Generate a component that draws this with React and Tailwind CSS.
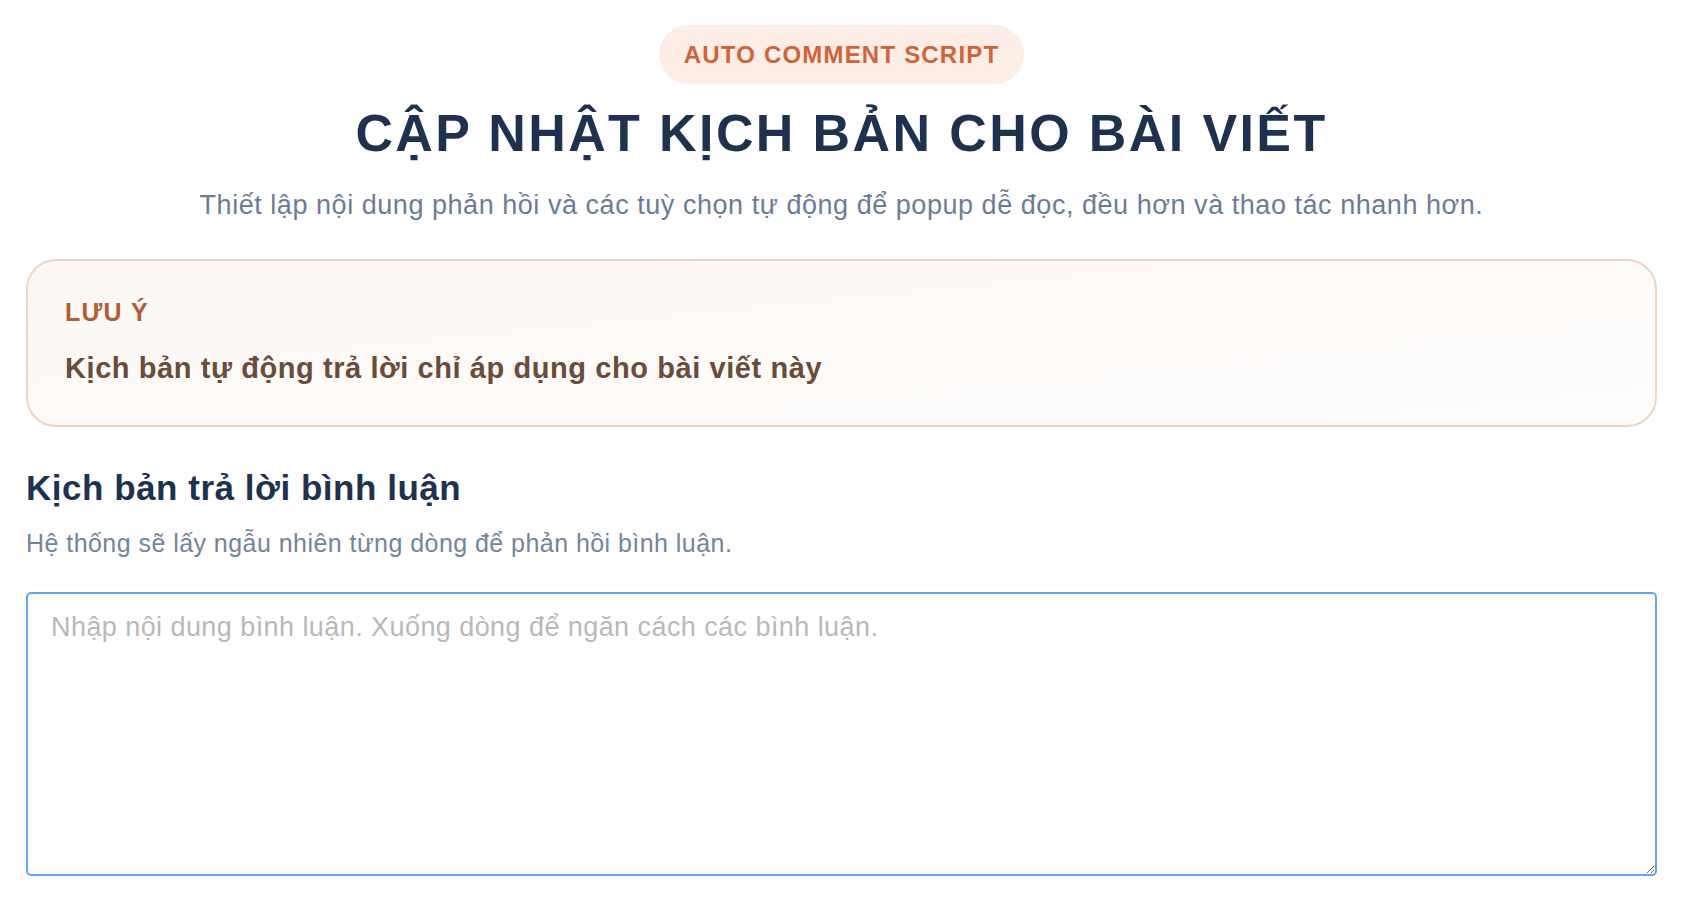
const fontCls = "font-['Liberation_Sans',Arial,sans-serif]";

const App = () => {
  return (
    <div className={`min-h-screen bg-white pl-[26px] pr-[39px] pt-[25px] ${fontCls}`}>
      {/* HEADER */}
      <div className="flex flex-col items-center">
        <span className="inline-flex h-[59px] items-center rounded-full bg-[#fcede7] px-[25px] text-[24px] font-bold uppercase tracking-[0.05em] text-[#cf6438]">
          Auto comment script
        </span>
        <h1 className="mt-[19px] text-[52px] font-bold leading-[60px] tracking-[0.046em] text-[#1e3250]">
          CẬP NHẬT KỊCH BẢN CHO BÀI VIẾT
        </h1>
        <p className="mt-[26px] text-[27px] leading-[32px] tracking-[0.02em] text-[#6b7d96]">
          Thiết lập nội dung phản hồi và các tuỳ chọn tự động để popup dễ đọc, đều hơn và thao tác nhanh hơn.
        </p>
      </div>

      {/* NOTE */}
      <div className="mt-[38px] rounded-[30px] border-2 border-[#f0d4c0] bg-gradient-to-br from-[#fcf7f3] to-[#fefdfc] px-[37px] pt-[36px] pb-[40px]">
        <p className="text-[25px] font-bold uppercase leading-[30px] tracking-[0.05em] text-[#b45c33]">
          Lưu ý
        </p>
        <p className="mt-[24px] text-[29px] font-bold leading-[34px] tracking-[0.02em] text-[#6b4b3a]">
          Kịch bản tự động trả lời chỉ áp dụng cho bài viết này
        </p>
      </div>

      {/* COMMENT SCRIPT */}
      <h2 className="mt-[40px] text-[35px] font-bold leading-[42px] tracking-[0.015em] text-[#1e3250]">
        Kịch bản trả lời bình luận
      </h2>
      <p className="mt-[19px] text-[25px] leading-[30px] tracking-[0.018em] text-[#75849b]">
        Hệ thống sẽ lấy ngẫu nhiên từng dòng để phản hồi bình luận.
      </p>
      <textarea
        className="mt-[34px] block h-[284px] w-full rounded-[5px] border-2 border-[#60a3f5] bg-white pl-[23px] pr-[21px] pt-[17px] text-[27px] leading-[32px] tracking-[0.016em] text-[#334155] outline-none placeholder:text-[#b9b9b9]"
        placeholder="Nhập nội dung bình luận. Xuống dòng để ngăn cách các bình luận."
      />
    </div>
  );
};

export default App;
